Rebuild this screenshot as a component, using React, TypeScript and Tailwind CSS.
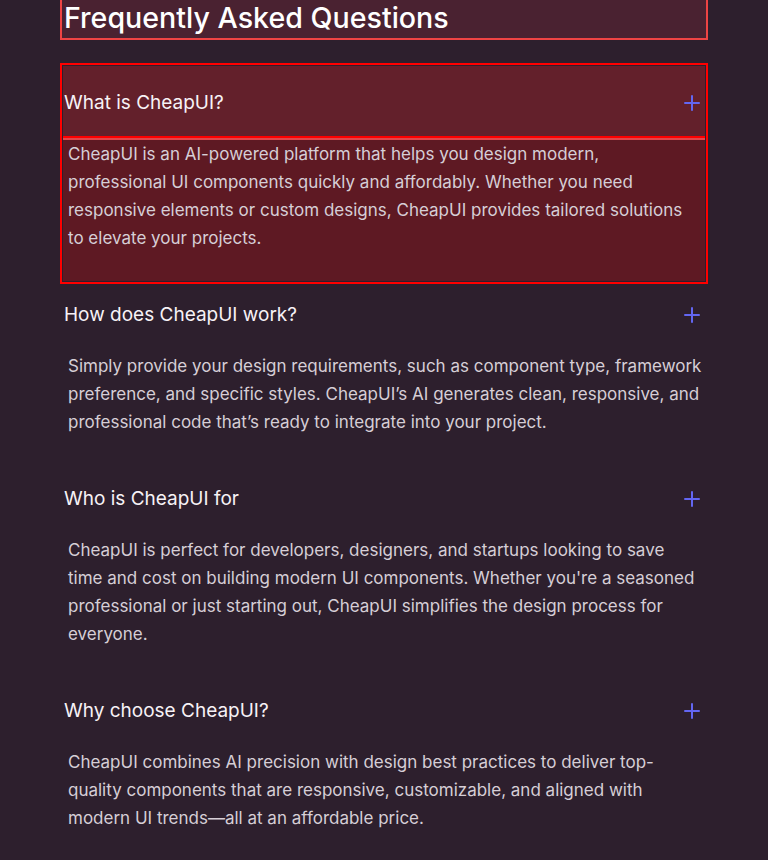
import { Plus } from 'lucide-react';

interface FaqItem {
  q: string;
  a: string[];
}

// answers are kept as the lines they break into in the design
const faqs: FaqItem[] = [
  {
    q: 'What is CheapUI?',
    a: [
      'CheapUI is an AI-powered platform that helps you design modern,',
      'professional UI components quickly and affordably. Whether you need',
      'responsive elements or custom designs, CheapUI provides tailored solutions',
      'to elevate your projects.',
    ],
  },
  {
    q: 'How does CheapUI work?',
    a: [
      'Simply provide your design requirements, such as component type, framework',
      'preference, and specific styles. CheapUI\u2019s AI generates clean, responsive, and',
      'professional code that\u2019s ready to integrate into your project.',
    ],
  },
  {
    q: 'Who is CheapUI for',
    a: [
      'CheapUI is perfect for developers, designers, and startups looking to save',
      "time and cost on building modern UI components. Whether you're a seasoned",
      'professional or just starting out, CheapUI simplifies the design process for',
      'everyone.',
    ],
  },
  {
    q: 'Why choose CheapUI?',
    a: [
      'CheapUI combines AI precision with design best practices to deliver top-',
      'quality components that are responsive, customizable, and aligned with',
      'modern UI trends\u2014all at an affordable price.',
    ],
  },
];

function FaqRow({ item, active }: { item: FaqItem; active: boolean }) {
  return (
    <div className={active ? 'bg-[#5e1923] outline-2 outline-offset-1 outline-[#ff0000]' : ''}>
      <div
        className={`flex items-center justify-between pl-px pr-px ${
          active ? 'h-[72px] border-b-2 border-[#ff0000] bg-[#63202b] pt-[4px]' : 'h-[66px] pt-[2px]'
        }`}
      >
        <span className="text-[19px] leading-6 text-[#f7f2f6]">{item.q}</span>
        <Plus size={24} strokeWidth={2} className="text-[#6366f1]" />
      </div>
      <div className={active ? 'border-t-2 border-[#e0474c]' : 'pt-[5px]'}>
        <div className="pl-[5px] pb-[29px] text-[17px] leading-7 text-[#d6ced6]">
          {item.a.map((line) => (
            <p key={line} className="whitespace-nowrap">
              {line}
            </p>
          ))}
        </div>
      </div>
    </div>
  );
}

export default function App() {
  return (
    <div className="min-h-[860px] bg-[#2d1f2d] font-['Inter',sans-serif]">
      <div className="mx-auto w-[642px]">
        <h2 className="-mx-px h-[38px] bg-[#4a2231] pl-[2px] text-[28.6px] leading-9 font-medium text-white outline-2 outline-[#ef4444]">
          Frequently Asked Questions
        </h2>
        <div className="mt-[28px] flex flex-col">
          {faqs.map((f, i) => (
            <FaqRow key={f.q} item={f} active={i === 0} />
          ))}
        </div>
      </div>
    </div>
  );
}
